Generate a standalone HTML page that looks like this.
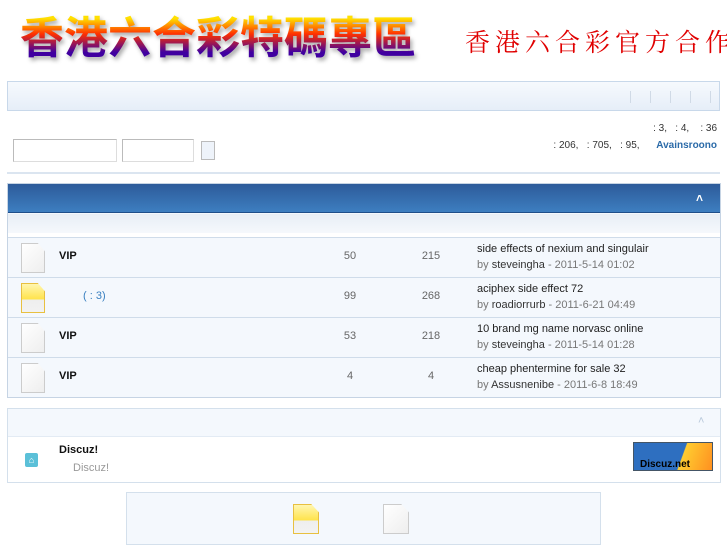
<!DOCTYPE html>
<html><head><meta charset="utf-8"><style>
*{margin:0;padding:0;box-sizing:border-box}
body{width:727px;height:545px;background:#fff;font-family:"Liberation Sans",Arial,sans-serif;font-size:11px;color:#333;position:relative;overflow:hidden}
.a{position:absolute}
.logo{left:20px;top:8px;font:bold 44px/52px "WenQuanYi Zen Hei","Noto Sans CJK TC",sans-serif;letter-spacing:0px;background:linear-gradient(#ffe000 20%,#ff3000 50%,#4000a0 85%);-webkit-background-clip:text;color:transparent;filter:drop-shadow(2px 3px 2px #aaa);white-space:nowrap}
.slog{left:465px;top:24px;width:262px;overflow:hidden;font:25px/34px "Noto Serif CJK SC","WenQuanYi Zen Hei",serif;color:#e00000;white-space:nowrap;letter-spacing:5px}
.nav{left:7px;top:81px;width:713px;height:30px;border:1px solid #c8d8ea;background:linear-gradient(#f6f9fd,#e6eef8)}
.inp{border:1px solid #bbb;border-right-color:#ddd;border-bottom-color:#ddd;background:#fff}
.doc{width:24px;height:30px;background:linear-gradient(135deg,#fff,#eee);border:1px solid #ccc;clip-path:polygon(0 0,70% 0,100% 28%,100% 100%,0 100%)}
.doc.y{background:linear-gradient(#fff6b0,#ffe34a 55%,#eee 56%,#f2f2f2);border-color:#e8c040}
.row{left:8px;width:712px;height:40px;border-top:1px solid #cfdcea;background:#f4f8fd}
.b{font-weight:bold;color:#111}
.n{color:#666;text-align:center;width:40px}
.t{color:#222}
.by{color:#777}.by b{color:#333;font-weight:normal}
</style></head><body>
<div class="a logo">香港六合彩特碼專區</div>
<div class="a slog">香港六合彩官方合作網</div>
<div class="a nav"><div class="a" style="right:8px;top:9px;width:100px;height:12px;background:repeating-linear-gradient(90deg,transparent 0 19px,#d0dae6 19px 20px)"></div></div>
<div class="a" style="right:10px;top:123px;font-size:10px;color:#333">: 3,&nbsp;&nbsp; : 4,&nbsp;&nbsp;&nbsp; : 36</div>
<div class="a" style="right:10px;top:140px;font-size:10px;color:#333">: 206,&nbsp;&nbsp; : 705,&nbsp;&nbsp; : 95,&nbsp;&nbsp;&nbsp;&nbsp;&nbsp; <b style="color:#2a6aa8">Avainsroono</b></div>
<div class="a inp" style="left:13px;top:139px;width:104px;height:23px"></div>
<div class="a inp" style="left:122px;top:139px;width:72px;height:23px"></div>
<div class="a" style="left:201px;top:141px;width:14px;height:19px;border:1px solid #bbb;background:#eef3fa"></div>
<div class="a" style="left:7px;top:172px;width:713px;height:2px;background:#dbe5f0"></div>
<div class="a" style="left:7px;top:183px;width:714px;height:215px;border:1px solid #c6d4e4;background:#f4f8fd"></div>
<div class="a" style="left:8px;top:184px;width:712px;height:29px;background:linear-gradient(#2d5b9a,#3d7ec0);border-bottom:1px solid #1f4e8a"></div>
<div class="a" style="left:696px;top:191px;color:#fff;font-size:12px;font-weight:bold">˄</div>
<div class="a" style="left:8px;top:214px;width:712px;height:19px;background:linear-gradient(#e8eef6,#f5f8fc)"></div>
<div class="a" style="left:8px;top:233px;width:712px;height:4px;background:#fff"></div>
<div class="a row" style="top:237px"></div>
<div class="a row" style="top:277px"></div>
<div class="a row" style="top:317px"></div>
<div class="a row" style="top:357px"></div>
<div class="a doc" style="left:21px;top:243px"></div>
<div class="a doc y" style="left:21px;top:283px"></div>
<div class="a doc" style="left:21px;top:323px"></div>
<div class="a doc" style="left:21px;top:363px"></div>
<div class="a b" style="left:59px;top:250px">VIP</div>
<div class="a" style="left:83px;top:290px;color:#3a80c0">( : 3)</div>
<div class="a b" style="left:59px;top:330px">VIP</div>
<div class="a b" style="left:59px;top:370px">VIP</div>
<div class="a n" style="left:330px;top:250px">50</div><div class="a n" style="left:411px;top:250px">215</div>
<div class="a n" style="left:330px;top:290px">99</div><div class="a n" style="left:411px;top:290px">268</div>
<div class="a n" style="left:330px;top:330px">53</div><div class="a n" style="left:411px;top:330px">218</div>
<div class="a n" style="left:330px;top:370px">4</div><div class="a n" style="left:411px;top:370px">4</div>
<div class="a t" style="left:477px;top:243px">side effects of nexium and singulair</div>
<div class="a by" style="left:477px;top:259px">by <b>steveingha</b> - 2011-5-14 01:02</div>
<div class="a t" style="left:477px;top:283px">aciphex side effect 72</div>
<div class="a by" style="left:477px;top:299px">by <b>roadiorrurb</b> - 2011-6-21 04:49</div>
<div class="a t" style="left:477px;top:323px">10 brand mg name norvasc online</div>
<div class="a by" style="left:477px;top:339px">by <b>steveingha</b> - 2011-5-14 01:28</div>
<div class="a t" style="left:477px;top:363px">cheap phentermine for sale 32</div>
<div class="a by" style="left:477px;top:379px">by <b>Assusnenibe</b> - 2011-6-8 18:49</div>
<div class="a" style="left:7px;top:408px;width:714px;height:75px;border:1px solid #d4e0ec;background:#fff"></div>
<div class="a" style="left:8px;top:409px;width:712px;height:28px;background:#f4f8fd;border-bottom:1px solid #e3ebf4"></div>
<div class="a" style="left:698px;top:415px;color:#b8c8da;font-size:11px">˄</div>
<div class="a" style="left:25px;top:453px;width:13px;height:14px;background:#5bc0d8;border-radius:2px;color:#fff;font-size:9px;text-align:center;line-height:14px">⌂</div>
<div class="a b" style="left:59px;top:444px">Discuz!</div>
<div class="a" style="left:73px;top:462px;color:#999">Discuz!</div>
<div class="a" style="left:633px;top:442px;width:80px;height:29px;border:1px solid #456;background:linear-gradient(110deg,#2e6fc0 60%,#ffcc30 61%,#ff9020);font:bold 10px/13px sans-serif;color:#000;padding:15px 0 0 6px">Discuz.net</div>
<div class="a" style="left:126px;top:492px;width:475px;height:53px;border:1px solid #d4e0ec;background:#f4f8fd"></div>
<div class="a doc y" style="left:293px;top:504px;width:26px;height:30px"></div>
<div class="a doc" style="left:383px;top:504px;width:26px;height:30px"></div>
</body></html>
